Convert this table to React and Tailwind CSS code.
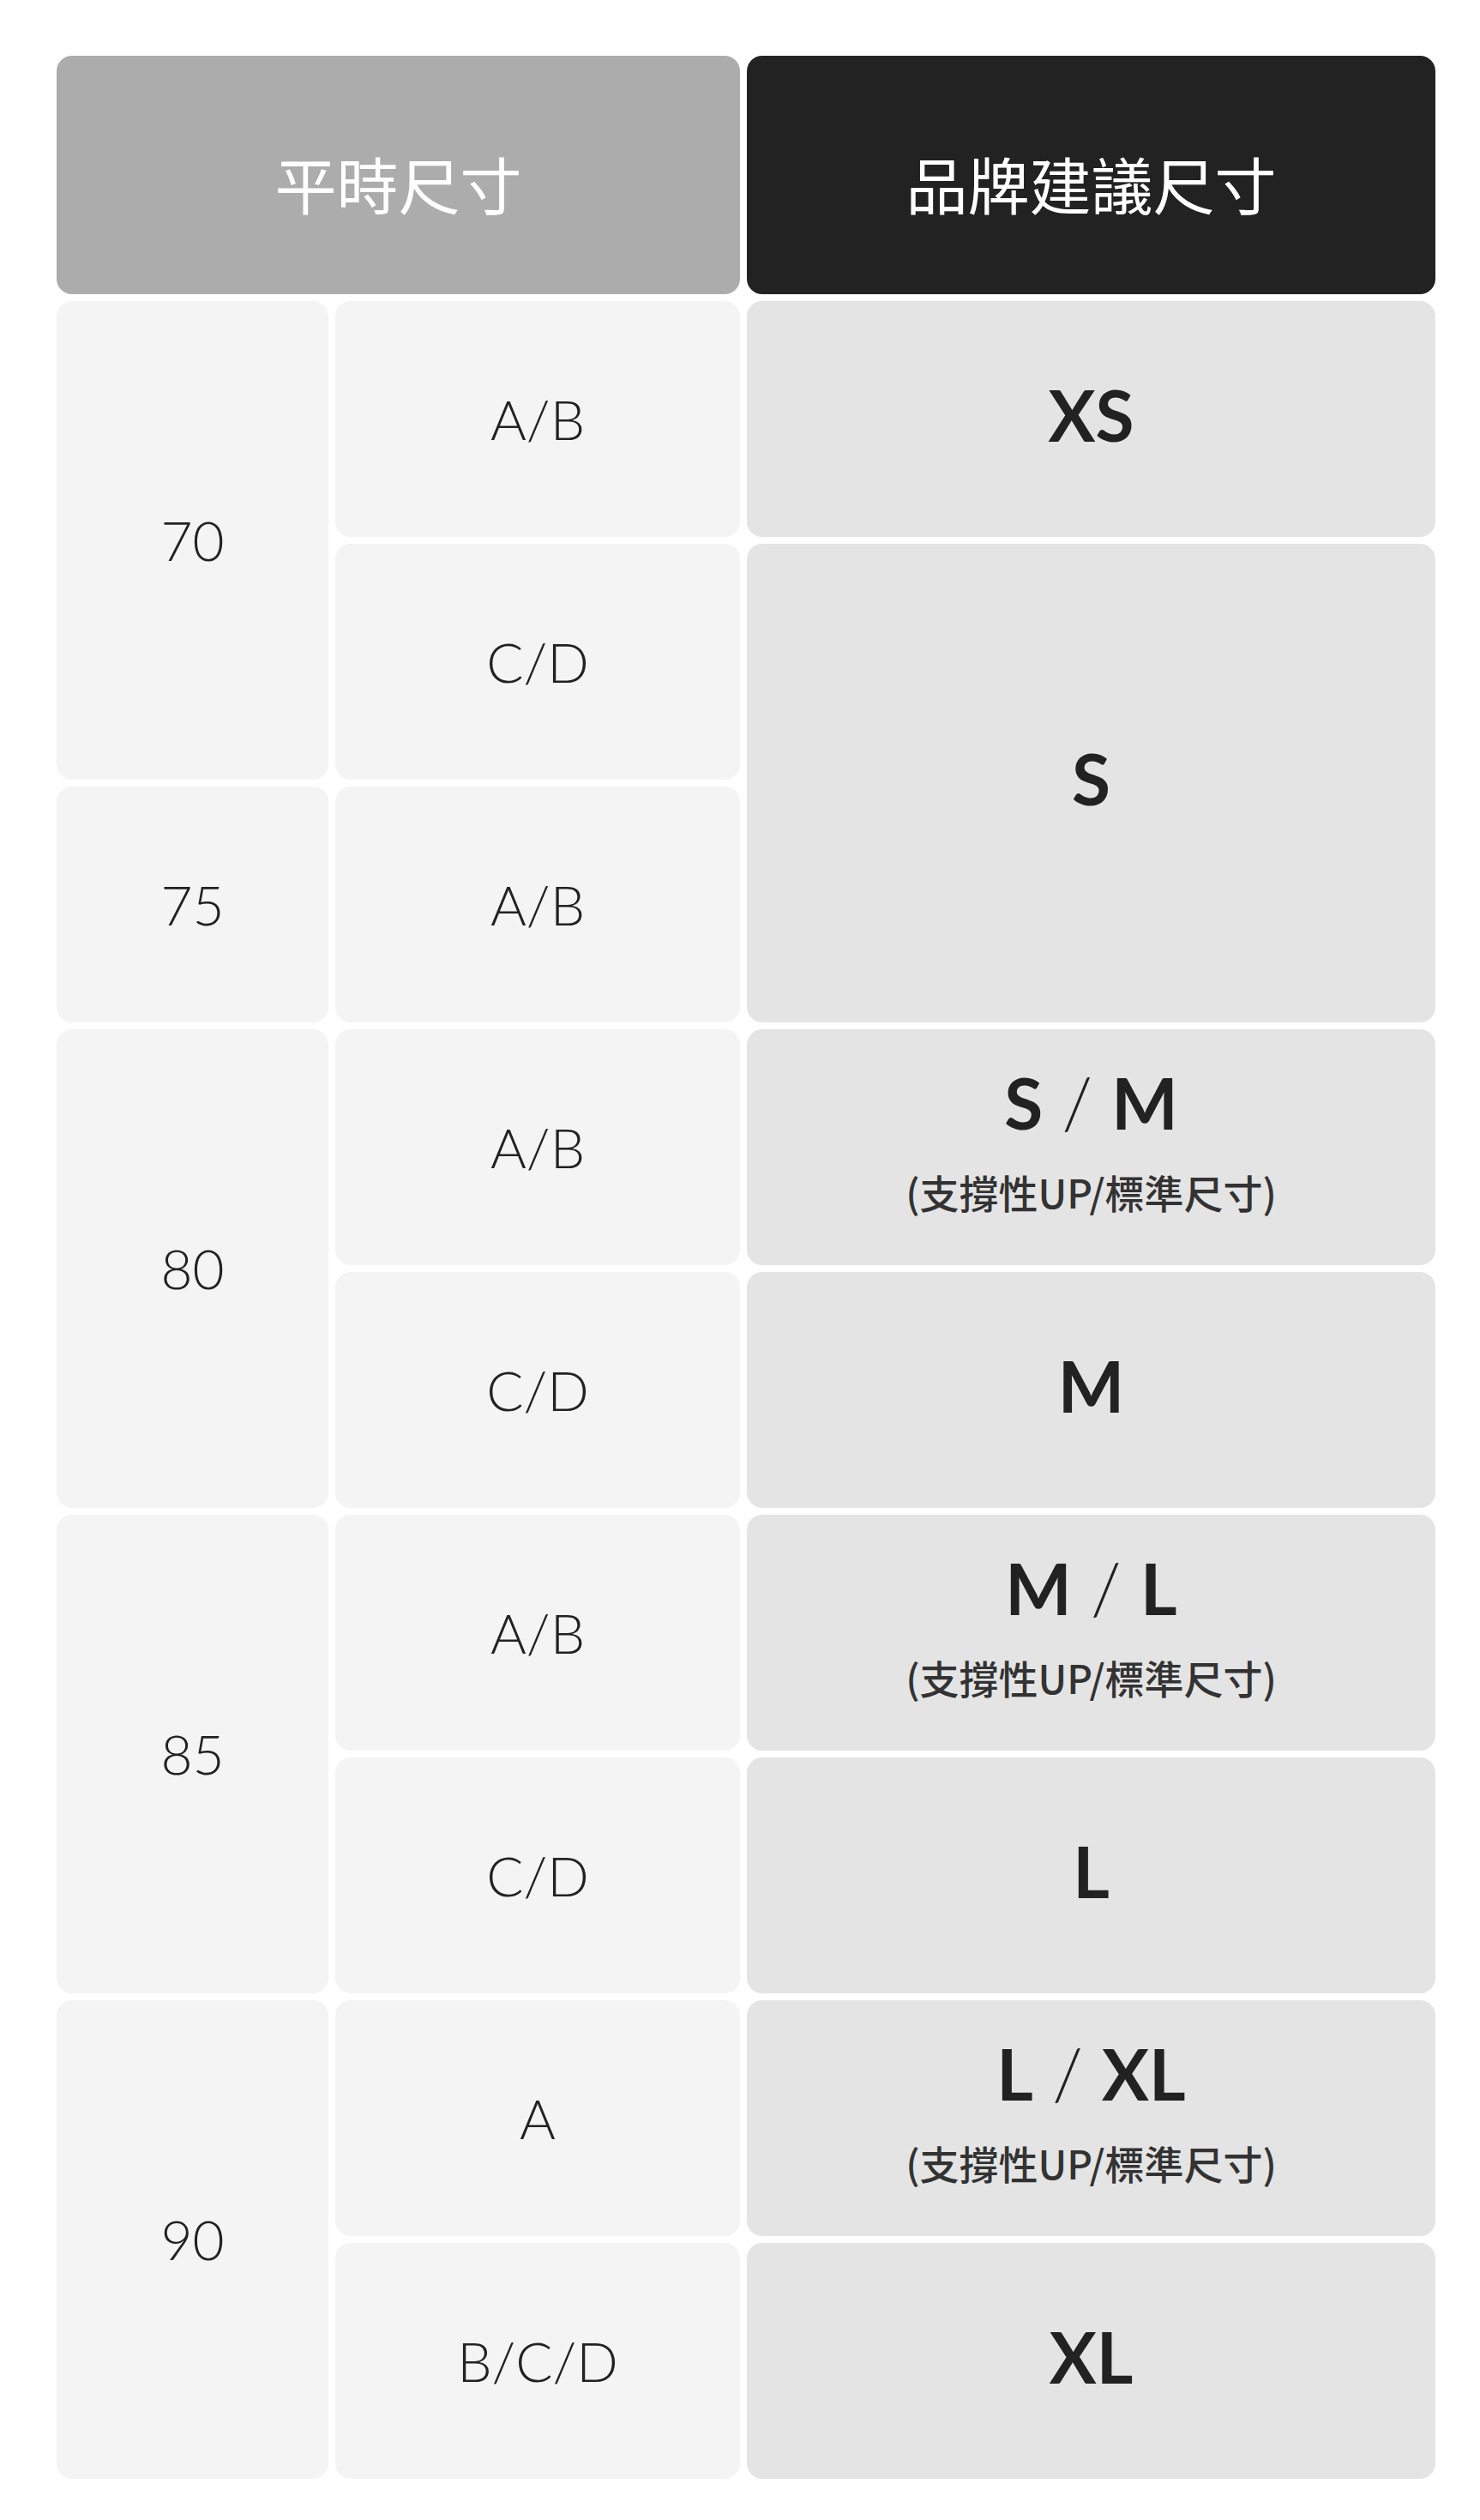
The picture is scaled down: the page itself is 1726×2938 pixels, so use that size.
import React from 'react'

const latin = "font-['Lato','Noto_Sans_CJK_TC',sans-serif]"
const cjk = "font-['Noto_Sans_CJK_TC','Noto_Sans',sans-serif]"

function Cell({ className = '', children }) {
  return (
    <div className={`flex flex-col items-center justify-center rounded-[18px] ${className}`}>
      {children}
    </div>
  )
}

function Size({ parts, note }) {
  return (
    <div className={`flex flex-col items-center ${note ? 'pb-[20px]' : 'pb-[12px]'}`}>
      <div className={`${latin} text-[82px] leading-none text-[#222222] whitespace-pre`}>
        {parts.map((p, i) => (
          <span key={i}>
            {i > 0 && <span className="font-light">{' / '}</span>}
            <span className="font-bold">{p}</span>
          </span>
        ))}
      </div>
      {note && (
        <div className={`${cjk} mt-[40px] text-[46px] leading-none font-medium text-[#333333]`}>
          (支撐性UP/標準尺寸)
        </div>
      )}
    </div>
  )
}

const bandCls = `bg-[#f4f4f4] ${latin} text-[64px] font-light text-[#222222]`
const sizeCls = 'bg-[#e4e4e4]'

export default function App() {
  return (
    <div className="min-h-[2938px] bg-white pt-[65px] pl-[66px]">
      <div className="grid grid-cols-[317px_472px_803px] grid-rows-[278px_repeat(9,275px)] gap-2">
        <Cell className={`col-span-2 bg-[#acacac] ${cjk} text-[72px] text-white pt-[18px]`}>平時尺寸</Cell>
        <Cell className={`bg-[#222222] ${cjk} text-[72px] text-white pt-[18px]`}>品牌建議尺寸</Cell>

        {/* 70 */}
        <Cell className={`row-span-2 ${bandCls}`}>70</Cell>
        <Cell className={bandCls}>A/B</Cell>
        <Cell className={sizeCls}><Size parts={['XS']} /></Cell>

        <Cell className={bandCls}>C/D</Cell>
        <Cell className={`row-span-2 ${sizeCls}`}><Size parts={['S']} /></Cell>

        {/* 75 */}
        <Cell className={bandCls}>75</Cell>
        <Cell className={bandCls}>A/B</Cell>

        {/* 80 */}
        <Cell className={`row-span-2 ${bandCls}`}>80</Cell>
        <Cell className={bandCls}>A/B</Cell>
        <Cell className={sizeCls}><Size parts={['S', 'M']} note /></Cell>
        <Cell className={bandCls}>C/D</Cell>
        <Cell className={sizeCls}><Size parts={['M']} /></Cell>

        {/* 85 */}
        <Cell className={`row-span-2 ${bandCls}`}>85</Cell>
        <Cell className={bandCls}>A/B</Cell>
        <Cell className={sizeCls}><Size parts={['M', 'L']} note /></Cell>
        <Cell className={bandCls}>C/D</Cell>
        <Cell className={sizeCls}><Size parts={['L']} /></Cell>

        {/* 90 */}
        <Cell className={`row-span-2 ${bandCls}`}>90</Cell>
        <Cell className={bandCls}>A</Cell>
        <Cell className={sizeCls}><Size parts={['L', 'XL']} note /></Cell>
        <Cell className={bandCls}>B/C/D</Cell>
        <Cell className={sizeCls}><Size parts={['XL']} /></Cell>
      </div>
    </div>
  )
}
